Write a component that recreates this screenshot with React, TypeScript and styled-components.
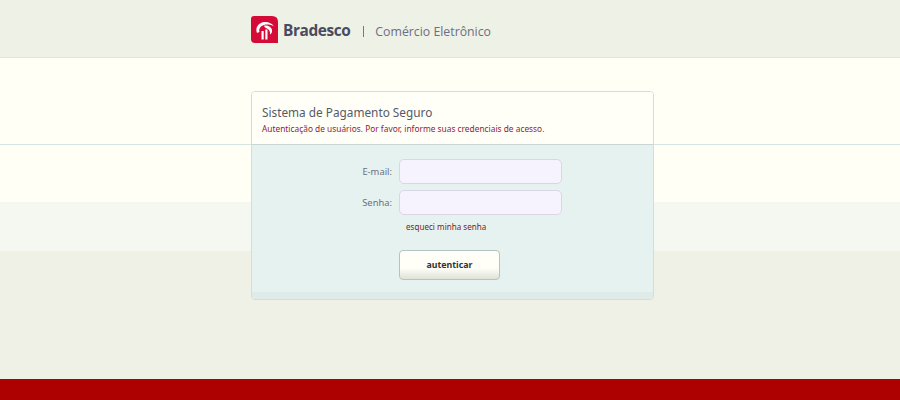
import styled, { createGlobalStyle } from "styled-components";

const GlobalStyle = createGlobalStyle`
    html, body {
        margin: 0;
        padding: 0;
    }
    body {
        font-family: "Noto Sans", Verdana, sans-serif;
    }
`

const Page = styled.div`
    width: 900px;
    height: 400px;
    overflow: hidden;
    display: flex;
    flex-direction: column;
    background: linear-gradient(
        to bottom,
        #eef1e6 0 57px,
        #d9e8e6 57px 58px,
        #fffff6 58px 144px,
        #d5e4e2 144px 145px,
        #fffff6 145px 202px,
        #f5f8f0 202px 251px,
        #eff1e7 251px
    );
`

const Header = styled.header`
    height: 57px;
    padding: 16px 0 0 251px;
    box-sizing: border-box;
    display: flex;
    align-items: flex-start;
`

const Brand = styled.span`
    font: 700 15.4px/30px "Open Sans", sans-serif;
    color: #4a4a60;
    margin-left: 5px;
    letter-spacing: -0.4px;
`

const Divider = styled.span`
    width: 1px;
    height: 11px;
    margin: 10px 11px 0 13px;
    background: #77778a;
`

const Subtitle = styled.span`
    font: 400 12.3px/32px "Open Sans", sans-serif;
    color: #6d6d85;
`

const Main = styled.main`
    flex: 1;
    padding: 34px 0 0 251px;
`

const Card = styled.section`
    width: 403px;
    height: 209px;
    box-sizing: border-box;
    border: 1px solid #d8d9e2;
    border-radius: 4px;
    overflow: hidden;
    display: flex;
    flex-direction: column;
`

const CardHead = styled.div`
    height: 53px;
    box-sizing: border-box;
    padding: 12px 10px 0;
    background: #fffff8;
    border-bottom: 1px solid #c9d6d4;
`

const Title = styled.h1`
    margin: 0;
    font: 400 11.8px/16px "Noto Sans", sans-serif;
    color: #555a68;
`

const Hint = styled.p`
    margin: 3px 0 0;
    font: 400 8.35px/12px "Noto Sans", sans-serif;
    color: #8f1c3a;
`

const CardBody = styled.form`
    flex: 1;
    padding-top: 14px;
    background: #e5f2ef;
    border-bottom: 7px solid #deebe8;
`

const Row = styled.label`
    display: flex;
    align-items: center;
    justify-content: flex-end;
    width: 310px;
    margin-bottom: 6px;
`

const FieldLabel = styled.span`
    font: 400 9.4px/12px "Noto Sans", sans-serif;
    color: #6f6f78;
    margin-right: 7px;
`

const Input = styled.input`
    width: 163px;
    height: 25px;
    box-sizing: border-box;
    border: 1px solid #d9d6e6;
    border-radius: 5px;
    background: #f6f2fe;
    outline: none;
`

const Forgot = styled.a`
    display: block;
    margin: 5px 0 0 154px;
    font: 400 8.1px/12px "Noto Sans", sans-serif;
    color: #801f10;
`

const Submit = styled.button`
    display: block;
    width: 101px;
    height: 30px;
    margin: 17px 0 0 147px;
    padding: 0;
    box-sizing: border-box;
    border: 1px solid #b4c4c2;
    border-radius: 4px;
    background: linear-gradient(to bottom, #fffff8 0 60%, #dfe2d6 100%);
    font: 700 8.8px/12px "Noto Sans", sans-serif;
    color: #333;
`

const Footer = styled.footer`
    height: 21px;
    background: #ad0000;
`

function Logo() {
    return (
        <svg width="27" height="28" viewBox="0 0 27 28">
            <path d="M3 0H21Q27 0 27 6V27H4Q0 27 0 23V3Q0 0 3 0Z" fill="#d40b37" />
            <path
                d="M6 17C4 12 7 7 13 6C17 5.500 21 7 23 10.500C20 8.500 16 8 13 9C9.500 10 7.500 13 8.500 16Z"
                fill="#fff"
            />
            <path
                d="M13 9.500C17 9 20.500 11 21 14C21.300 16 20.500 17.500 19 18.500C19.500 15.500 18 13 15.500 12.200C14 11.700 13.500 11 13 9.500Z"
                fill="#fff"
            />
            <rect x="10.500" y="15" width="2.200" height="8.500" fill="#fff" />
            <rect x="14.300" y="13.500" width="2.200" height="10" fill="#fff" />
        </svg>
    )
}

export default function App() {
    return (
        <Page>
            <GlobalStyle />
            <Header>
                <Logo />
                <Brand>Bradesco</Brand>
                <Divider />
                <Subtitle>Comércio Eletrônico</Subtitle>
            </Header>
            <Main>
                <Card>
                    <CardHead>
                        <Title>Sistema de Pagamento Seguro</Title>
                        <Hint>Autenticação de usuários. Por favor, informe suas credenciais de acesso.</Hint>
                    </CardHead>
                    <CardBody>
                        <Row>
                            <FieldLabel>E-mail:</FieldLabel>
                            <Input type="text" />
                        </Row>
                        <Row>
                            <FieldLabel>Senha:</FieldLabel>
                            <Input type="password" />
                        </Row>
                        <Forgot>esqueci minha senha</Forgot>
                        <Submit type="button">autenticar</Submit>
                    </CardBody>
                </Card>
            </Main>
            <Footer />
        </Page>
    )
}
